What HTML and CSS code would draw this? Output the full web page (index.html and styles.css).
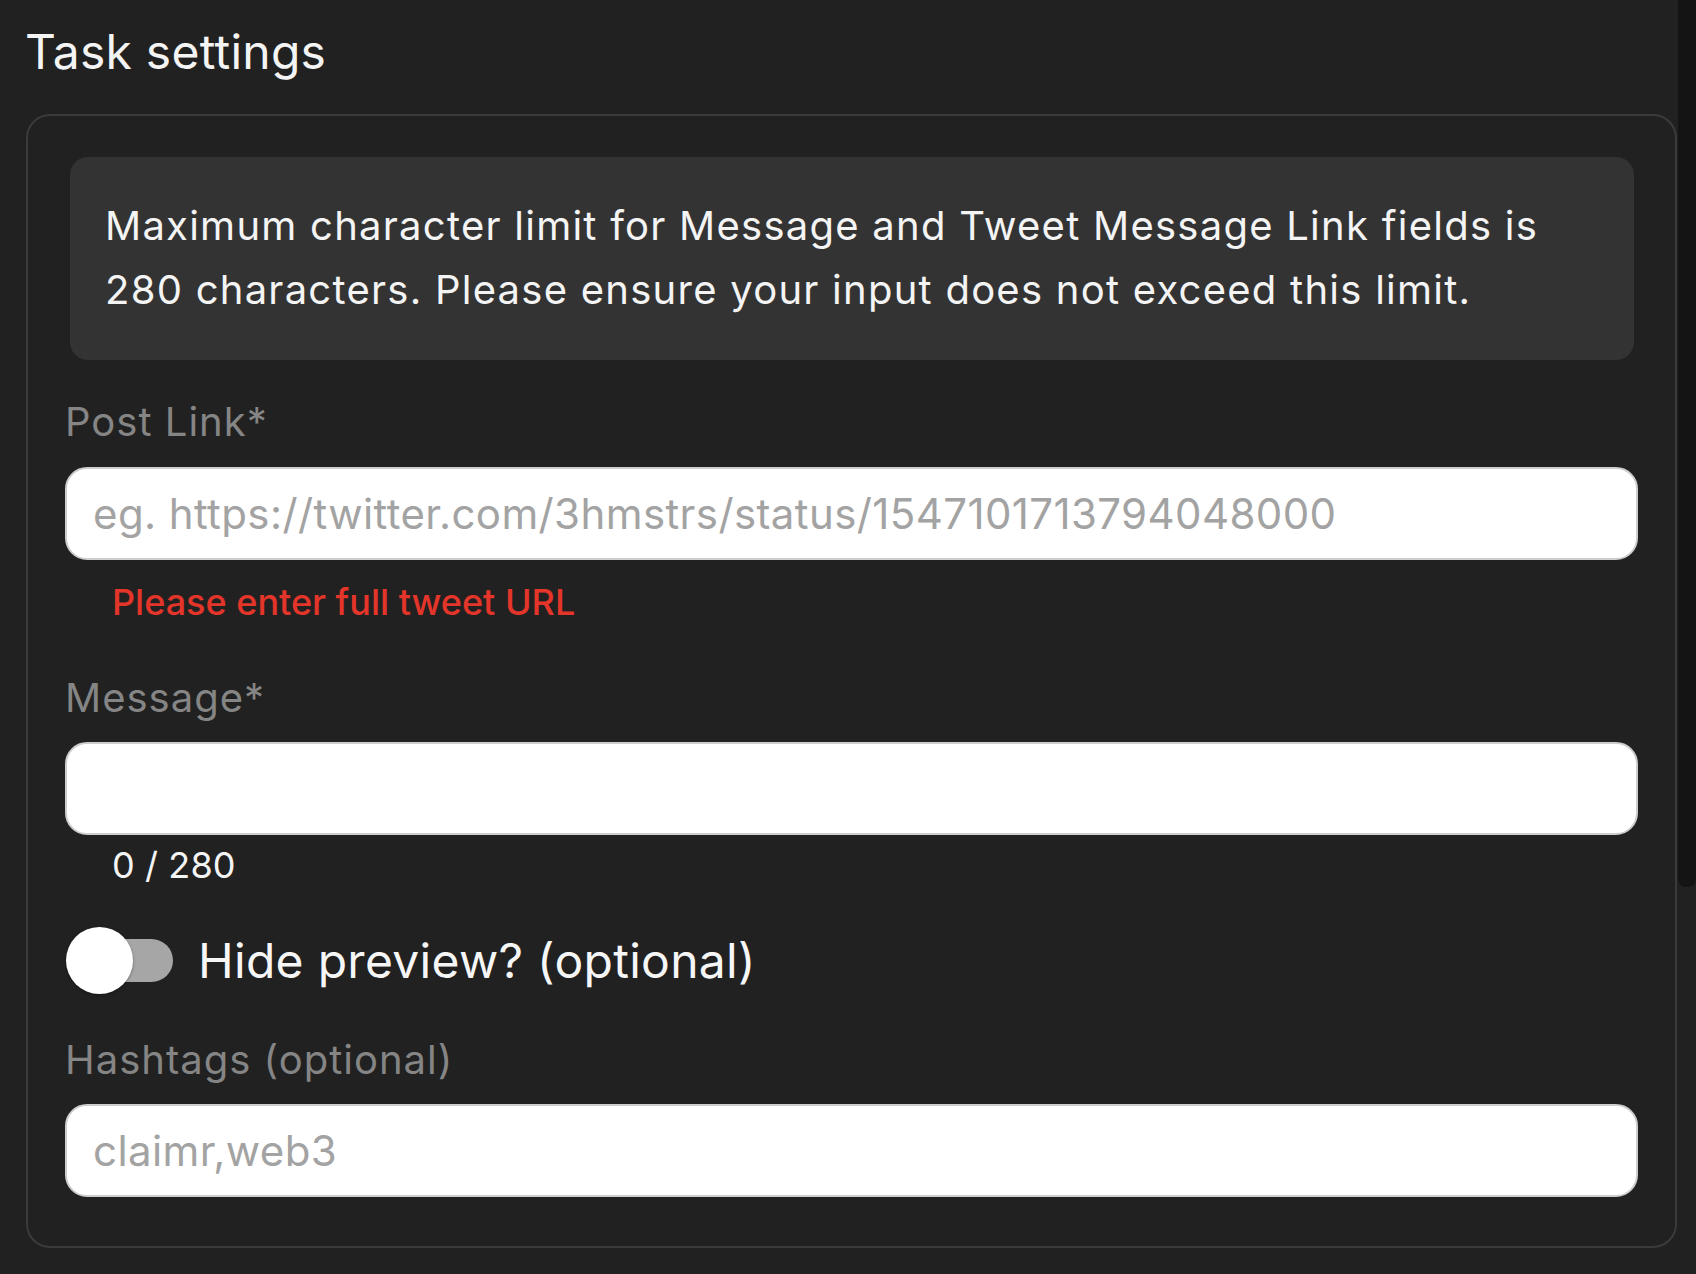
FILE: index.html
```html
<!DOCTYPE html>
<html lang="en">
<head>
<meta charset="utf-8">
<title>Task settings</title>
<link rel="stylesheet" href="styles.css">
</head>
<body>
<div class="layout">
  <main class="page">
    <h1 class="title">Task settings</h1>
    <section class="card">
      <div class="notice">Maximum character limit for Message and Tweet Message Link fields is 280 characters. Please ensure your input does not exceed this limit.</div>

      <label class="label label-first" for="post">Post Link*</label>
      <input class="field" id="post" type="text" placeholder="eg. https://twitter.com/3hmstrs/status/1547101713794048000">
      <div class="error">Please enter full tweet URL</div>

      <label class="label label-msg" for="msg">Message*</label>
      <input class="field" id="msg" type="text">
      <div class="counter">0 / 280</div>

      <div class="toggle-row">
        <span class="toggle"><span class="track"></span><span class="knob"></span></span>
        <span class="toggle-text">Hide preview? (optional)</span>
      </div>

      <label class="label label-tags" for="tags">Hashtags (optional)</label>
      <input class="field" id="tags" type="text" placeholder="claimr,web3">
    </section>
  </main>
  <div class="scrollbar"><div class="thumb"></div></div>
</div>
</body>
</html>
```
FILE: styles.css
```css
* { box-sizing: border-box; }
html, body {
  margin: 0;
  background: #212121;
  font-family: "Inter", "Noto Sans", sans-serif;
  color: #f2f2f2;
  overflow: hidden;
}
.layout {
  display: flex;
  height: 1274px;
}
.page {
  flex: 1;
  padding: 24px 1px 0 26px;
}
.scrollbar {
  width: 18px;
  background: #212121;
}
.thumb {
  height: 887px;
  background: #141414;
  border-radius: 0 0 8px 8px;
}
.title {
  margin: 0 0 0 -1px;
  font-size: 48px;
  font-weight: 400;
  line-height: 56px;
  letter-spacing: 0.25px;
  color: #f4f4f4;
}
.card {
  margin-top: 34px;
  border: 2px solid #3b3b3b;
  border-radius: 24px;
  padding: 41px 37px 49px 37px;
  display: flex;
  flex-direction: column;
}
.notice {
  margin: 0 4px 0 5px;
  background: #333333;
  border-radius: 18px;
  padding: 37px 36px 38px 35px;
  font-size: 40px;
  line-height: 64px;
  letter-spacing: 1.25px;
  color: #f4f4f4;
}
.label {
  display: block;
  font-size: 40px;
  line-height: 46px;
  letter-spacing: 1px;
  color: #858585;
  margin-bottom: 22px;
}
.label-first { margin-top: 39px; }
.label-msg { margin-top: 52px; margin-bottom: 21px; }
.label-tags { margin-top: 43px; margin-bottom: 21px; }
.field {
  display: block;
  width: 100%;
  height: 93px;
  background: #ffffff;
  border: 2px solid #cdcdcd;
  border-radius: 22px;
  padding: 0 26px;
  font-family: "Inter", "Noto Sans", sans-serif;
  font-size: 42px;
  letter-spacing: 0.4px;
  color: #222;
  outline: none;
}
.field::placeholder { color: #a3a3a3; }
.error {
  margin-top: 21px;
  padding-left: 47px;
  font-size: 36px;
  line-height: 42px;
  font-weight: 500;
  color: #e4352a;
}
.counter {
  margin-top: 9px;
  padding-left: 47px;
  font-size: 36px;
  line-height: 42px;
  letter-spacing: 0.1px;
  color: #f4f4f4;
}
.toggle-row {
  margin-top: 41px;
  display: flex;
  align-items: center;
  gap: 25px;
  height: 67px;
}
.toggle {
  position: relative;
  width: 108px;
  height: 67px;
  flex: none;
  display: flex;
  align-items: center;
  justify-content: flex-end;
}
.track {
  width: 92px;
  height: 43px;
  border-radius: 22px;
  background: #a6a6a6;
}
.knob {
  position: absolute;
  left: 1px;
  top: 0;
  width: 67px;
  height: 67px;
  border-radius: 50%;
  background: #ffffff;
  box-shadow: 0 1px 3px rgba(0,0,0,0.35);
}
.toggle-text {
  font-size: 48px;
  line-height: 58px;
  letter-spacing: 0.3px;
  color: #f6f6f6;
}
```
